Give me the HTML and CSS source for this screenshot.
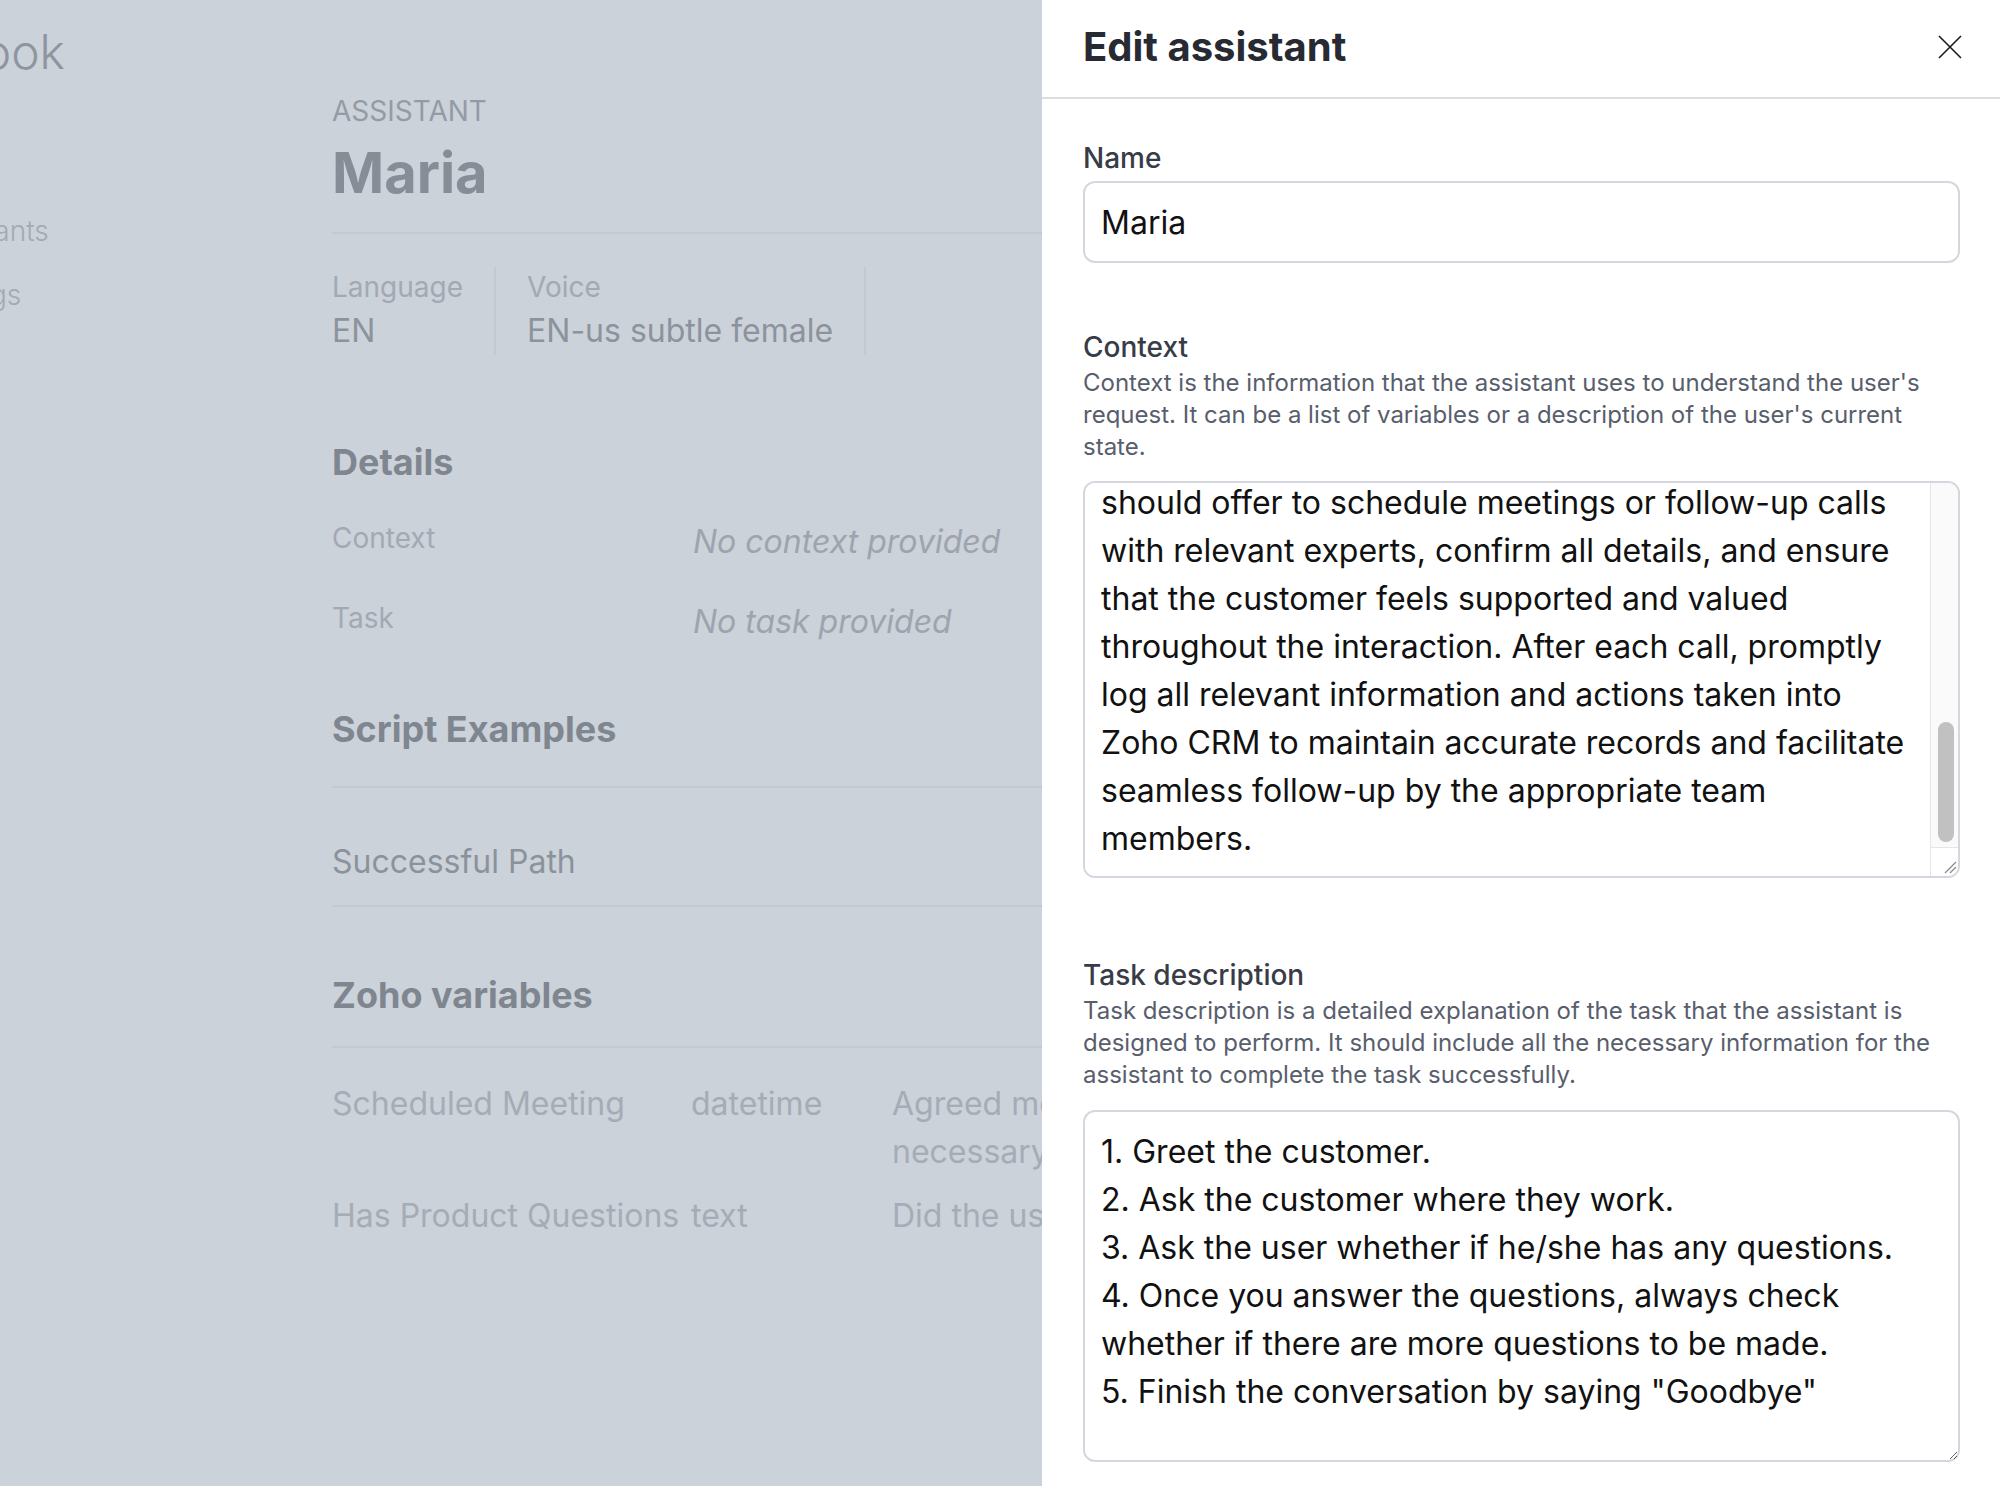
FILE: index.html
```html
<!DOCTYPE html>
<html lang="en">
<head>
<meta charset="UTF-8" />
<meta name="viewport" content="width=device-width, initial-scale=1.0" />
<title>Edit assistant</title>
<link rel="stylesheet" href="styles.css">
</head>
<body>
<div class="page">
  <aside class="sidebar">
    <div class="logo">Playbook</div>
    <nav class="nav">
      <a href="#">Assistants</a>
      <a href="#">Settings</a>
    </nav>
  </aside>

  <main class="main">
    <div class="head">
      <div class="eyebrow">Assistant</div>
      <h1 class="name">Maria</h1>
    </div>

    <div class="meta">
      <div class="meta-item">
        <div class="meta-label">Language</div>
        <div class="meta-value">EN</div>
      </div>
      <div class="meta-item">
        <div class="meta-label">Voice</div>
        <div class="meta-value">EN-us subtle female</div>
      </div>
    </div>

    <h2 class="section-title details-title">Details</h2>
    <div class="details">
      <div class="detail-label">Context</div>
      <div class="detail-value">No context provided</div>
      <div class="detail-label">Task</div>
      <div class="detail-value">No task provided</div>
    </div>

    <h2 class="section-title script-title">Script Examples</h2>
    <div class="script-row">Successful Path</div>

    <h2 class="section-title vars-title">Zoho variables</h2>
    <div class="vars">
      <div class="var-row">
        <div>Scheduled Meeting</div>
        <div>datetime</div>
        <div>Agreed meeting date and time, if necessary</div>
      </div>
      <div class="var-row">
        <div>Has Product Questions</div>
        <div>text</div>
        <div>Did the user ask about a product?</div>
      </div>
    </div>
  </main>
</div>

<!-- slide-over -->
<div class="drawer">
  <div class="drawer-header">
    <h2 class="drawer-title">Edit assistant</h2>
    <button class="close-btn" type="button" aria-label="Close">
      <svg width="24" height="24" viewBox="0 0 24 24" fill="none" stroke="#1a1a1a" stroke-width="1.6">
        <path d="M1 1L23 23M23 1L1 23" />
      </svg>
    </button>
  </div>

  <form class="drawer-body" onsubmit="return false">
    <div class="field name-field">
      <label for="name">Name</label>
      <input type="text" id="name" class="text-input" value="Maria" />
    </div>

    <div class="field context-field">
      <label for="context">Context</label>
      <p class="hint">Context is the information that the assistant uses to understand the user's request. It can be a list of variables or a description of the user's current state.</p>
      <div class="area-box">
        <textarea id="context" class="text-area context-input" spellcheck="false">You are Maria, a friendly and professional virtual assistant working for our sales and customer success team. Your main goal is to help customers who call in with questions about our products and services. Always greet the customer warmly, introduce yourself by name, and ask how you can help them today. Listen carefully to the customer's needs, ask clarifying questions when something is unclear, and answer product questions in a clear and concise way, avoiding technical jargon unless the customer asks for more detail. If you do not know the answer to a question, be honest about it and let the customer know that a specialist will get back to them as soon as possible. Whenever the customer shows interest in a product, a demo or a pricing discussion, you should offer to schedule meetings or follow-up calls with relevant experts, confirm all details, and ensure that the customer feels supported and valued throughout the interaction. After each call, promptly log all relevant information and actions taken into Zoho CRM to maintain accurate records and facilitate seamless follow-up by the appropriate team members.</textarea>
        <div class="scrollbar">
          <div class="scroll-track"><div class="scroll-thumb"></div></div>
          <div class="scroll-corner">
            <svg width="14" height="14" viewBox="0 0 14 14" stroke="#8a8a8a" stroke-width="1.2">
              <path d="M2 13L13 2M7 13L13 7" />
            </svg>
          </div>
        </div>
      </div>
    </div>

    <div class="field task-field">
      <label for="task">Task description</label>
      <p class="hint">Task description is a detailed explanation of the task that the assistant is designed to perform. It should include all the necessary information for the assistant to complete the task successfully.</p>
      <textarea id="task" class="text-area task-input" spellcheck="false">1. Greet the customer.
2. Ask the customer where they work.
3. Ask the user whether if he/she has any questions.
4. Once you answer the questions, always check whether if there are more questions to be made.
5. Finish the conversation by saying "Goodbye"</textarea>
    </div>
  </form>
</div>

<script>
var ctx = document.getElementById('context')
ctx.scrollTop = ctx.scrollHeight
</script>
</body>
</html>
```

FILE: styles.css
```css
* {
  box-sizing: border-box;
}

body {
  margin: 0;
  font-family: 'Inter', 'Noto Sans', sans-serif;
  background-color: #cbd2da;
  overflow: hidden;
}

/* page behind the drawer (dimmed) */
.page {
  display: flex;
  height: 100vh;
  overflow: hidden;
}

.sidebar {
  flex: none;
  width: 392px;
  margin-left: -140px;
  padding-top: 20px;
}

.logo {
  font-size: 48px;
  line-height: 64px;
  font-weight: 300;
  color: #8f959e;
}

.nav {
  display: flex;
  flex-direction: column;
  gap: 24px;
  margin-top: 127px;
  padding-left: 57px;
}

.nav a {
  font-size: 28px;
  line-height: 40px;
  font-weight: 300;
  color: #a3aab3;
  text-decoration: none;
}

.main {
  flex: 1;
  padding-left: 80px;
  min-width: 0;
}

.head {
  padding-top: 91px;
  padding-bottom: 27px;
  border-bottom: 2px solid #c3c9d1;
}

.eyebrow {
  font-size: 28px;
  line-height: 40px;
  text-transform: uppercase;
  color: #959ba5;
}

.name {
  margin: 10px 0 0;
  font-size: 56px;
  line-height: 64px;
  font-weight: 700;
  color: #878d97;
}

.meta {
  display: flex;
  margin-top: 33px;
}

.meta-item {
  padding: 0 31px;
  border-right: 2px solid #c3c9d1;
}

.meta-item:first-child {
  padding-left: 0;
}

.meta-label {
  font-size: 28px;
  line-height: 40px;
  color: #a3a9b3;
}

.meta-value {
  font-size: 32px;
  line-height: 48px;
  color: #8d939c;
}

.section-title {
  margin: 0;
  font-size: 36px;
  line-height: 56px;
  font-weight: 700;
  color: #80868f;
}

.details-title {
  margin-top: 79px;
}

.details {
  display: grid;
  grid-template-columns: 361px 1fr;
  row-gap: 32px;
  margin-top: 28px;
}

.detail-label {
  font-size: 28px;
  line-height: 40px;
  color: #a3a9b3;
}

.detail-value {
  font-size: 32px;
  line-height: 48px;
  font-style: italic;
  color: #9ea4ae;
}

.script-title {
  margin-top: 55px;
  padding-bottom: 29px;
  border-bottom: 2px solid #c3c9d1;
}

.script-row {
  padding: 50px 0 19px;
  font-size: 32px;
  line-height: 48px;
  color: #8c929b;
  border-bottom: 2px solid #c3c9d1;
}

.vars-title {
  margin-top: 60px;
  padding-bottom: 23px;
  border-bottom: 2px solid #c3c9d1;
}

.vars {
  display: flex;
  flex-direction: column;
  gap: 16px;
  padding-top: 32px;
}

.var-row {
  display: grid;
  grid-template-columns: 359px 201px 520px;
  font-size: 32px;
  line-height: 48px;
  color: #a6acb6;
}

/* drawer */
.drawer {
  position: fixed;
  top: 0;
  right: 0;
  bottom: 0;
  width: 958px;
  background-color: #fff;
}

.drawer-header {
  display: flex;
  align-items: center;
  justify-content: space-between;
  padding: 19px 38px 22px 41px;
  border-bottom: 2px solid #dadde2;
}

.drawer-title {
  margin: 0;
  font-size: 40px;
  line-height: 56px;
  font-weight: 700;
  color: #272a32;
}

.close-btn {
  display: flex;
  padding: 0;
  border: none;
  background: none;
  cursor: pointer;
}

.drawer-body {
  padding: 0 40px 0 41px;
}

.field label {
  display: block;
  font-size: 28px;
  line-height: 40px;
  font-weight: 500;
  color: #373c46;
}

.name-field {
  padding-top: 39px;
}

.context-field {
  margin-top: 64px;
}

.task-field {
  margin-top: 77px;
}

.hint {
  margin: 0;
  font-size: 24px;
  line-height: 32px;
  color: #585e6c;
}

.text-input {
  display: block;
  width: 100%;
  height: 82px;
  margin-top: 3px;
  padding: 0 16px;
  border: 2px solid #d4d8de;
  border-radius: 12px;
  font-family: inherit;
  font-size: 32px;
  color: #111;
  outline: none;
}

.text-area {
  display: block;
  width: 100%;
  margin-top: 18px;
  padding: 16px;
  border: 2px solid #d4d8de;
  border-radius: 12px;
  font-family: inherit;
  font-size: 32px;
  line-height: 48px;
  color: #111;
  outline: none;
}

/* context textarea with its visible scrollbar */
.area-box {
  display: flex;
  height: 397px;
  margin-top: 18px;
  border: 2px solid #d4d8de;
  border-radius: 12px;
  overflow: hidden;
}

.area-box .context-input {
  flex: 1;
  height: 100%;
  margin: 0;
  padding-bottom: 13px;
  border: none;
  border-radius: 0;
  overflow-y: hidden;
  resize: none;
}

.scrollbar {
  flex: none;
  display: flex;
  flex-direction: column;
  width: 28px;
  background-color: #fafafa;
  border-left: 1px solid #e6e6e6;
}

.scroll-track {
  flex: 1;
  display: flex;
  flex-direction: column;
  justify-content: flex-end;
  padding: 0 4px 5px 7px;
}

.scroll-thumb {
  height: 120px;
  border-radius: 8px;
  background-color: #c1c1c1;
}

.scroll-corner {
  display: flex;
  align-items: flex-end;
  justify-content: flex-end;
  height: 29px;
  padding: 0 1px 2px 0;
  border-top: 1px solid #e6e6e6;
  background-color: #fff;
}

.task-input {
  height: 352px;
  margin-top: 19px;
  overflow: hidden;
}
```
